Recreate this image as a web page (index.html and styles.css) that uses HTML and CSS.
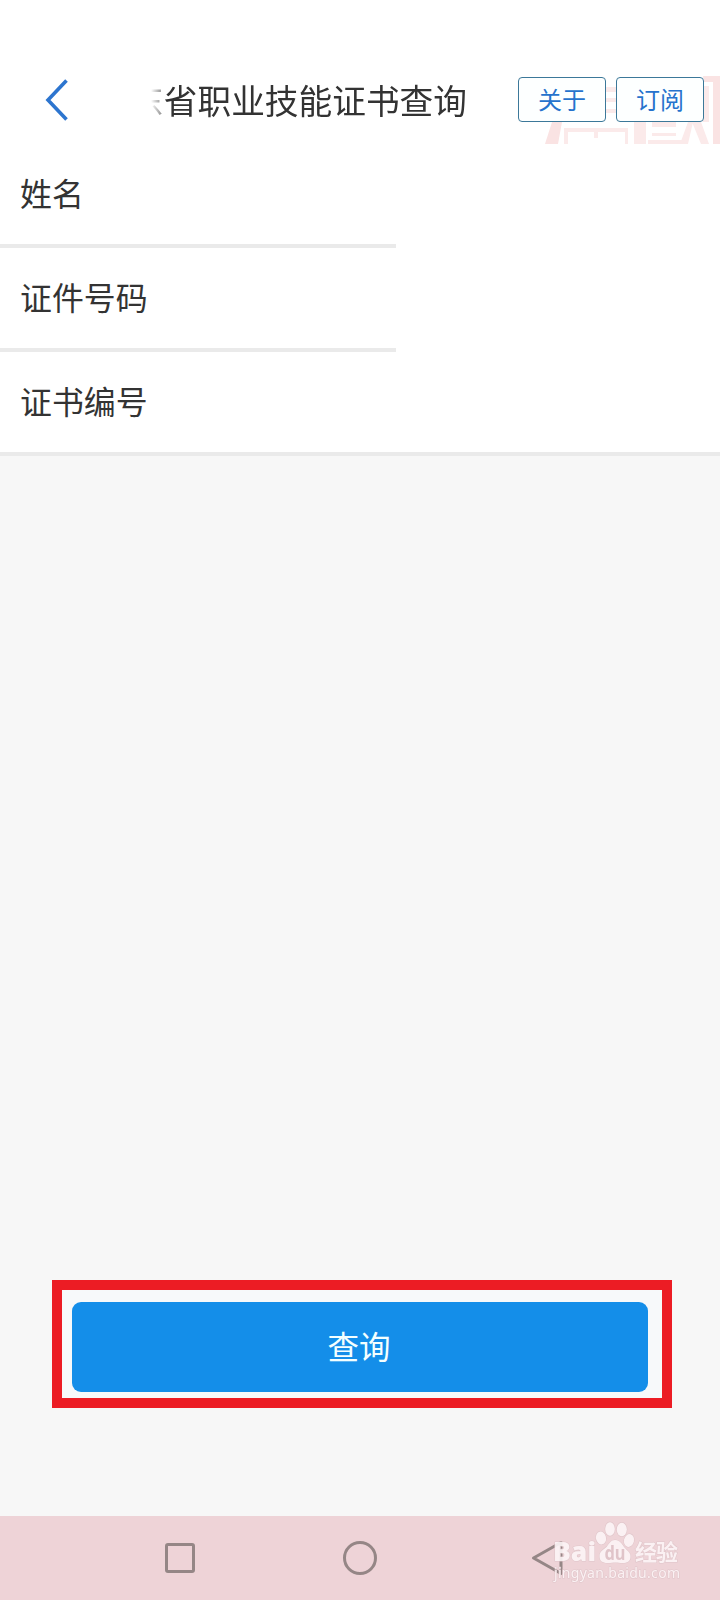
FILE: index.html
```html
<!DOCTYPE html>
<html lang="zh-CN">
<head>
    <meta charset="UTF-8">
    <meta name="viewport" content="width=device-width, initial-scale=1.0">
    <title>职业技能证书查询</title>
    <link rel="stylesheet" href="styles.css">
</head>
<body>
    <header class="header">
        <svg class="header-art" width="176" height="68" viewBox="0 0 176 68">
            <g fill="#fbeaea">
                <path d="M8 46h10l-4 22H1z" fill="#fae3e3"/>
                <path d="M159 0h17v68h-7V6h-9z" fill="#fae3e3"/>
                <path d="M61 11h28v5H61zM61 22h28v4H61zM61 33h28v4H61zM159 10h6v36h-6z"/>
                <path d="M90 46h12v22H90zM108 46h24v5h-24zM108 57h24v3h-24zM104 64h34v4h-34zM148 46h9l8 22h-8zM136 68l8-22h5l-5 22z"/>
                <path d="M20 52h64v16h-3V56H54v6h-4v-6H24v12h-4z"/>
            </g>
        </svg>
        <svg class="back" width="30" height="44" viewBox="0 0 30 44">
            <path d="M23.500 2.500L5 22l18.500 19.500" fill="none" stroke="#2d75cf" stroke-width="3.600"/>
        </svg>
        <div class="title"><span>东省职业技能证书查询</span></div>
        <div class="actions">
            <button class="action">关于</button>
            <button class="action">订阅</button>
        </div>
    </header>

    <form class="form">
        <label class="row">姓名</label>
        <label class="row">证件号码</label>
        <label class="row last">证书编号</label>
    </form>

    <main class="main">
        <div class="highlight">
            <button class="submit">查询</button>
        </div>
    </main>

    <nav class="navbar">
        <svg class="nav-icon" width="36" height="36" viewBox="0 0 36 36">
            <rect x="4.500" y="4.500" width="27" height="27" rx="1.500"/>
        </svg>
        <svg class="nav-icon" width="36" height="36" viewBox="0 0 36 36">
            <circle cx="18" cy="18" r="15.500"/>
        </svg>
        <svg class="nav-icon" width="36" height="36" viewBox="0 0 36 36">
            <path d="M11.500 18L39 2.500v31z"/>
        </svg>
        <!-- 水印 -->
        <svg class="watermark" width="140" height="70" viewBox="0 0 140 70">
            <g class="wm-shape">
                <ellipse cx="60" cy="13" rx="4.800" ry="6.800"/>
                <ellipse cx="71.800" cy="13.500" rx="5" ry="6.800"/>
                <ellipse cx="51" cy="22" rx="5" ry="6.500" transform="rotate(-12 51 22)"/>
                <ellipse cx="79" cy="24.500" rx="5" ry="6.500" transform="rotate(14 79 24.500)"/>
                <path d="M65 24c5 0 7 4 9 7 3 4 6.500 5 6.500 9.500 0 5-3.500 6.500-8 6.500-3 0-4-.500-7-.500s-5 .5-8 .5c-5 0-8-2-8-7 0-5 4-6 7.500-9.500 2-3 4-6.500 8-6.500z"/>
            </g>
            <text class="wm-bai" x="3" y="45" textLength="43" lengthAdjust="spacingAndGlyphs">Bai</text>
            <text class="wm-du" x="54.500" y="43.500" textLength="21" lengthAdjust="spacingAndGlyphs">du</text>
            <text class="wm-cn" x="85" y="44" textLength="43">经验</text>
            <text class="wm-url" x="4" y="62" textLength="126">jingyan.baidu.com</text>
        </svg>
    </nav>
</body>
</html>
```

FILE: styles.css
```css
* {
    box-sizing: border-box;
}

body {
    margin: 0;
    height: 1600px;
    display: flex;
    flex-direction: column;
    font-family: "Noto Sans CJK SC", sans-serif;
    color: #333;
    background-color: #f7f7f7;
    overflow: hidden;
}

button {
    font-family: inherit;
    padding: 0;
    cursor: pointer;
}

.header {
    position: relative;
    display: flex;
    align-items: center;
    height: 144px;
    padding: 56px 16px 0 43px;
    background-color: #fff;
}

.header-art {
    position: absolute;
    right: 0;
    bottom: 0;
}

.back {
    flex: none;
}

/* 标题滚动，左侧渐隐 */
.title {
    display: flex;
    justify-content: flex-end;
    width: 319px;
    margin-left: 75px;
    overflow: hidden;
    font-size: 33.700px;
    line-height: 48px;
    white-space: nowrap;
    -webkit-mask-image: linear-gradient(to right, transparent 3px, rgba(0, 0, 0, 0.5) 13px, #000 16px);
    mask-image: linear-gradient(to right, transparent 3px, rgba(0, 0, 0, 0.5) 13px, #000 16px);
}

.actions {
    position: relative;
    display: flex;
    gap: 10px;
    margin-left: auto;
    margin-bottom: 2px;
}

.action {
    width: 88px;
    height: 45px;
    border: 1px solid #3c7899;
    border-radius: 4px;
    background-color: #fdffff;
    color: #2673cd;
    font-size: 24px;
    line-height: 42px;
}

.form {
    display: flex;
    flex-direction: column;
    background-color: #fff;
}

.row {
    width: 396px;
    height: 104px;
    padding-left: 20px;
    border-bottom: 4px solid #eaeaea;
    font-size: 31.900px;
    line-height: 96px;
}

.row.last {
    width: 100%;
}

.main {
    flex: 1;
    display: flex;
    flex-direction: column;
    justify-content: flex-end;
    padding: 0 48px 108px 52px;
}

.highlight {
    height: 128px;
    padding: 12px 14px 6px 10px;
    border: 10px solid #ec1c24;
    background-color: #f7f9fa;
}

.submit {
    display: block;
    width: 100%;
    height: 90px;
    padding: 0 2px 4px 0;
    border: none;
    border-radius: 9px;
    background-color: #148ee9;
    color: #f4ffff;
    font-size: 31.500px;
}

.navbar {
    position: relative;
    display: flex;
    justify-content: center;
    gap: 144px;
    height: 84px;
    padding-top: 24px;
    background-color: #eed3d7;
}

.nav-icon {
    overflow: visible;
    fill: none;
    stroke: #958686;
    stroke-width: 3;
    stroke-linejoin: round;
}

.watermark {
    position: absolute;
    left: 550px;
    top: 0;
    opacity: 0.9;
}

.wm-shape,
.wm-bai,
.wm-cn,
.wm-url {
    fill: #fdf5f7;
    stroke: #dfc5c9;
    stroke-width: 1.200px;
    paint-order: stroke;
}

.wm-bai {
    font: 800 27px "Open Sans", sans-serif;
}

.wm-du {
    font: bold 19px "Noto Sans", sans-serif;
    fill: #dfc3c8;
}

.wm-cn {
    font: bold 22px "Noto Sans CJK SC", sans-serif;
}

.wm-url {
    font: 14px "Noto Sans", sans-serif;
}
```
